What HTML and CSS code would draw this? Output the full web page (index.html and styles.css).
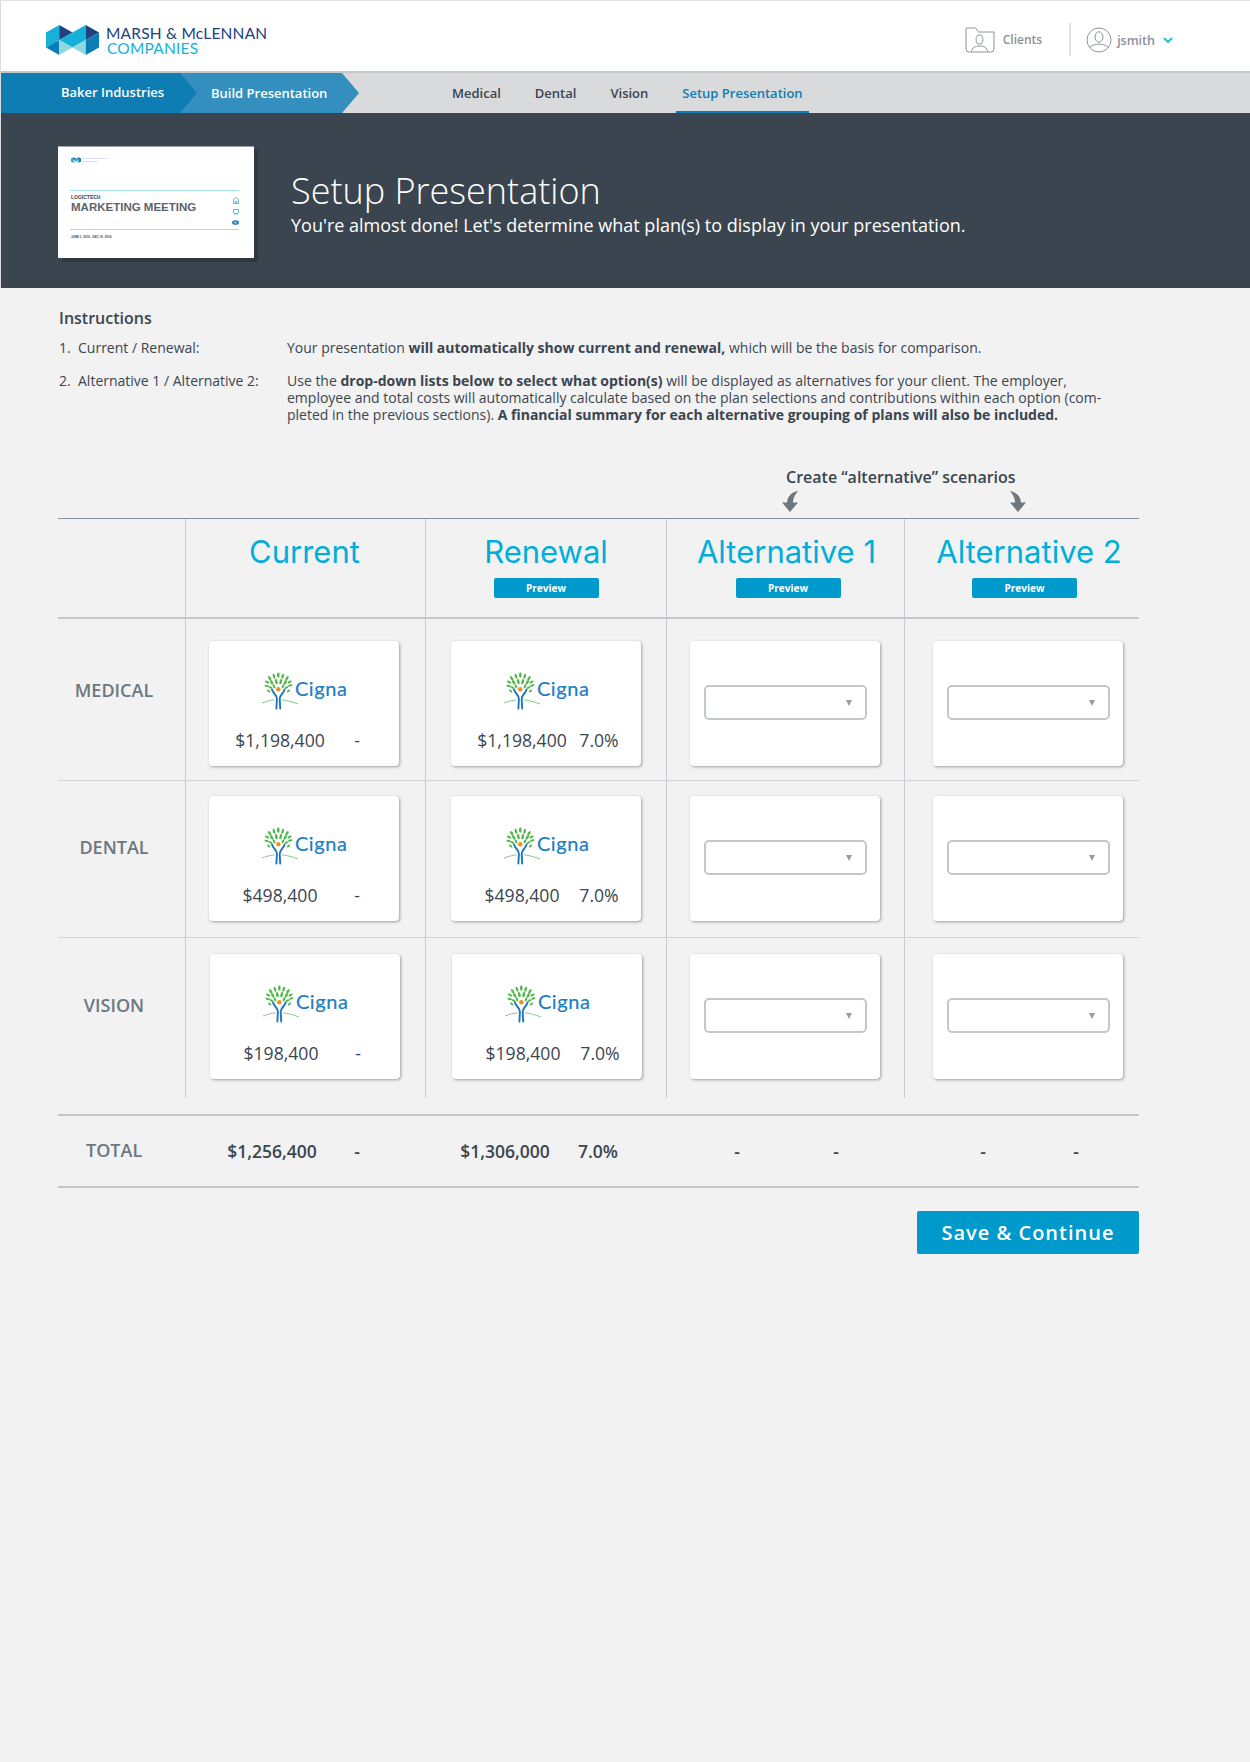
FILE: index.html
```html
<!DOCTYPE html>
<html lang="en">
<head>
    <meta charset="UTF-8">
    <title>Setup Presentation</title>
    <link rel="stylesheet" href="styles.css">
</head>
<body>
<svg class="defs" width="0" height="0">
    <symbol id="mmc-logo" viewBox="0 0 160 90">
        <polygon fill="#16b1d9" points="0,22 40,0 40,45 0,68"/>
        <polygon fill="#21407f" points="40,0 80,22 40,45"/>
        <polygon fill="#16b1d9" points="80,22 120,0 120,45 80,68 40,45"/>
        <polygon fill="#21407f" points="120,0 160,22 120,45"/>
        <polygon fill="#0d7db5" points="0,68 40,45 40,90"/>
        <polygon fill="#8fd8e0" points="40,45 80,68 40,90"/>
        <polygon fill="#8fd8e0" points="120,45 80,68 120,90"/>
        <polygon fill="#0d7db5" points="160,22 120,45 120,90 160,68"/>
    </symbol>
    <symbol id="cigna-tree" viewBox="0 0 36 38">
        <g fill="#4fb848">
            <ellipse cx="16.3" cy="3" rx="1.3" ry="2.8"/>
            <ellipse cx="12" cy="4.3" rx="1.2" ry="2.6" transform="rotate(-18 12 4.3)"/>
            <ellipse cx="20.7" cy="4.3" rx="1.2" ry="2.6" transform="rotate(18 20.7 4.3)"/>
            <ellipse cx="7.7" cy="6.3" rx="1.2" ry="2.5" transform="rotate(-35 7.7 6.3)"/>
            <ellipse cx="25" cy="6.3" rx="1.2" ry="2.5" transform="rotate(35 25 6.3)"/>
            <ellipse cx="14.3" cy="9.7" rx="1.3" ry="2.7" transform="rotate(-12 14.3 9.7)"/>
            <ellipse cx="18.7" cy="9.7" rx="1.3" ry="2.7" transform="rotate(12 18.7 9.7)"/>
            <ellipse cx="9.7" cy="10.3" rx="1.3" ry="2.5" transform="rotate(-30 9.7 10.3)"/>
            <ellipse cx="23.3" cy="10.3" rx="1.3" ry="2.5" transform="rotate(30 23.3 10.3)"/>
            <ellipse cx="5" cy="10" rx="1.1" ry="2.3" transform="rotate(-60 5 10)"/>
            <ellipse cx="27.6" cy="10" rx="1.1" ry="2.3" transform="rotate(60 27.6 10)"/>
            <ellipse cx="12" cy="14.3" rx="1.1" ry="2.2" transform="rotate(-25 12 14.3)"/>
            <ellipse cx="21" cy="14.3" rx="1.1" ry="2.2" transform="rotate(25 21 14.3)"/>
            <ellipse cx="4.7" cy="14" rx="1" ry="2.3" transform="rotate(-78 4.7 14)"/>
            <ellipse cx="28.3" cy="13.5" rx="1" ry="2.3" transform="rotate(78 28.3 13.5)"/>
            <ellipse cx="8.5" cy="15.5" rx="1" ry="2.1" transform="rotate(-65 8.5 15.5)"/>
            <ellipse cx="24.6" cy="15.5" rx="1" ry="2.1" transform="rotate(65 24.6 15.5)"/>
            <ellipse cx="6.7" cy="19" rx="1" ry="1.9" transform="rotate(-50 6.7 19)"/>
            <ellipse cx="26.5" cy="19" rx="1" ry="1.9" transform="rotate(50 26.5 19)"/>
        </g>
        <circle cx="16.3" cy="17.3" r="2.2" fill="#f28e1e"/>
        <g fill="none" stroke="#1c75bc" stroke-width="1.9" stroke-linecap="round">
            <path d="M10 17.5C11 21.5 14.4 22 14.9 27L14.4 36.5"/>
            <path d="M22.6 17.5C21.4 21.5 18.2 22 17.7 27L18.2 36.5"/>
        </g>
        <g fill="none" stroke="#7cc576" stroke-width="0.9">
            <path d="M0 31C4 29.4 8.5 28.4 12.5 27.8"/>
            <path d="M20 27.8C25 28.4 31 30 36 32"/>
        </g>
    </symbol>
</svg>

<div class="page">
    <header class="topbar">
        <div class="brand">
            <svg class="brand-mark" width="53" height="30"><use href="#mmc-logo"/></svg>
            <div class="brand-name">
                <div class="brand-line1">MARSH &amp; McLENNAN</div>
                <div class="brand-line2">COMPANIES</div>
            </div>
        </div>
        <div class="account">
            <a class="clients" href="#">
                <svg width="30" height="26" viewBox="0 0 30 26" fill="none" stroke="#8f959b" stroke-width="1">
                    <path d="M1 1H10.5L13.5 5H29V22Q29 25 26 25H4Q1 25 1 22Z"/>
                    <ellipse cx="14.5" cy="12.5" rx="3.4" ry="4.6"/>
                    <path d="M6.5 24.500C7 20.500 10 19 14.500 19C19 19 22 20.500 22.500 24.500"/>
                </svg>
                <span>Clients</span>
            </a>
            <a class="user" href="#">
                <svg width="26" height="26" viewBox="0 0 26 26" fill="none" stroke="#8f959b" stroke-width="1">
                    <circle cx="13" cy="13" r="12"/>
                    <ellipse cx="13" cy="10" rx="4" ry="5.200"/>
                    <path d="M3.500 20.500C6.500 18 9.500 17.200 13 17.200C16.500 17.200 19.500 18 22.500 20.500"/>
                </svg>
                <span>jsmith</span>
                <svg class="caret" width="10" height="7" viewBox="0 0 10 7" fill="none" stroke="#2cc0cc" stroke-width="2.2">
                    <path d="M1 1L5 5L9 1"/>
                </svg>
            </a>
        </div>
    </header>

    <nav class="navbar">
        <a class="crumb crumb-first" href="#">Baker Industries</a>
        <a class="crumb crumb-second" href="#">Build Presentation</a>
        <ul class="tabs">
            <li><a href="#">Medical</a></li>
            <li><a href="#">Dental</a></li>
            <li><a href="#">Vision</a></li>
            <li class="cur"><a href="#">Setup Presentation</a></li>
        </ul>
    </nav>

    <section class="banner">
        <div class="thumb">
            <div class="thumb-brand">
                <svg width="10" height="6"><use href="#mmc-logo"/></svg>
                <span>MARSH &amp; McLENNAN<br>COMPANIES</span>
            </div>
            <div class="thumb-body">
                <div class="thumb-client">LOGICTECH</div>
                <div class="thumb-title">MARKETING MEETING</div>
                <div class="thumb-icons">
                    <svg width="6" height="7" viewBox="0 0 6 7" fill="none" stroke="#3fa9d6" stroke-width="0.8"><path d="M0.500 6.500V2.500L3 0.500L5.500 2.500V6.500ZM2.200 6.500V4.500H3.800V6.500"/></svg>
                    <svg width="6" height="6" viewBox="0 0 6 6" fill="none" stroke="#3fa9d6" stroke-width="0.9"><path d="M0.500 0.500H5.500V3L4.300 5.500L3 4L1.700 5.500L0.500 3Z"/></svg>
                    <svg width="7" height="5" viewBox="0 0 7 5"><ellipse cx="3.500" cy="2.500" rx="3.500" ry="2.300" fill="#2f7fb8"/><circle cx="3.500" cy="2.500" r="1" fill="#bfe3f2"/></svg>
                </div>
            </div>
            <div class="thumb-date">JUNE 1, 2016 - DEC 30, 2016</div>
        </div>
        <div class="banner-text">
            <h1>Setup Presentation</h1>
            <p>You're almost done! Let's determine what plan(s) to display in your presentation.</p>
        </div>
    </section>

    <main class="content">
        <h2 class="instr-title">Instructions</h2>
        <div class="instr">
            <span>1.</span>
            <span>Current / Renewal:</span>
            <p>Your presentation <b>will automatically show current and renewal,</b> which will be the basis for comparison.</p>
            <span>2.</span>
            <span>Alternative 1 / Alternative 2:</span>
            <p>Use the <b>drop-down lists below to select what option(s)</b> will be displayed as alternatives for your client. The employer,<br>employee and total costs will automatically calculate based on the plan selections and contributions within each option (com-<br>pleted in the previous sections). <b>A financial summary for each alternative grouping of plans will also be included.</b></p>
        </div>

        <div class="scenario">
            <div class="scenario-text">Create “alternative” scenarios</div>
            <div class="scenario-arrows">
                <svg width="16" height="21" viewBox="0 0 16 21" fill="#6d7780"><path d="M16 0C10 1 5.500 5 5 11.500H0L8 21L16 11.500H11C11 8 12.500 4 16 0Z"/></svg>
                <svg width="16" height="21" viewBox="0 0 16 21" fill="#6d7780"><path d="M0 0C6 1 10.500 5 11 11.500H16L8 21L0 11.500H5C5 8 3.500 4 0 0Z"/></svg>
            </div>
        </div>

        <div class="tbl-row tbl-head">
            <div class="cell"></div>
            <div class="cell head-cell head-cur"><h3>Current</h3></div>
            <div class="cell head-cell"><h3>Renewal</h3><a class="btn-preview" href="#">Preview</a></div>
            <div class="cell head-cell head-alt1"><h3>Alternative 1</h3><a class="btn-preview" href="#">Preview</a></div>
            <div class="cell head-cell head-alt2"><h3>Alternative 2</h3><a class="btn-preview" href="#">Preview</a></div>
        </div>

        <div class="tbl-row row-medical">
            <div class="cell row-label">MEDICAL</div>
            <div class="cell card-cell">
                <div class="card plan">
                    <div class="cigna"><svg width="36" height="38"><use href="#cigna-tree"/></svg><span>Cigna</span></div>
                    <div class="figures"><span>$1,198,400</span><span>-</span></div>
                </div>
            </div>
            <div class="cell card-cell cell-ren">
                <div class="card plan">
                    <div class="cigna"><svg width="36" height="38"><use href="#cigna-tree"/></svg><span>Cigna</span></div>
                    <div class="figures"><span>$1,198,400</span><span>7.0%</span></div>
                </div>
            </div>
            <div class="cell card-cell"><div class="card"><div class="select-box"></div></div></div>
            <div class="cell card-cell cell-alt2"><div class="card"><div class="select-box"></div></div></div>
        </div>

        <div class="tbl-row row-dental">
            <div class="cell row-label">DENTAL</div>
            <div class="cell card-cell">
                <div class="card plan">
                    <div class="cigna"><svg width="36" height="38"><use href="#cigna-tree"/></svg><span>Cigna</span></div>
                    <div class="figures"><span>$498,400</span><span>-</span></div>
                </div>
            </div>
            <div class="cell card-cell cell-ren">
                <div class="card plan">
                    <div class="cigna"><svg width="36" height="38"><use href="#cigna-tree"/></svg><span>Cigna</span></div>
                    <div class="figures"><span>$498,400</span><span>7.0%</span></div>
                </div>
            </div>
            <div class="cell card-cell"><div class="card"><div class="select-box"></div></div></div>
            <div class="cell card-cell cell-alt2"><div class="card"><div class="select-box"></div></div></div>
        </div>

        <div class="tbl-row row-vision">
            <div class="cell row-label">VISION</div>
            <div class="cell card-cell">
                <div class="card plan">
                    <div class="cigna"><svg width="36" height="38"><use href="#cigna-tree"/></svg><span>Cigna</span></div>
                    <div class="figures"><span>$198,400</span><span>-</span></div>
                </div>
            </div>
            <div class="cell card-cell cell-ren">
                <div class="card plan">
                    <div class="cigna"><svg width="36" height="38"><use href="#cigna-tree"/></svg><span>Cigna</span></div>
                    <div class="figures"><span>$198,400</span><span>7.0%</span></div>
                </div>
            </div>
            <div class="cell card-cell"><div class="card"><div class="select-box"></div></div></div>
            <div class="cell card-cell cell-alt2"><div class="card"><div class="select-box"></div></div></div>
        </div>

        <div class="tbl-row tbl-total">
            <div class="total-label">TOTAL</div>
            <div class="total total-cur"><span>$1,256,400</span><span>-</span></div>
            <div class="total total-ren"><span>$1,306,000</span><span>7.0%</span></div>
            <div class="total total-alt1"><span>-</span><span>-</span></div>
            <div class="total total-alt2"><span>-</span><span>-</span></div>
        </div>

        <div class="actions">
            <a class="btn-save" href="#">Save &amp; Continue</a>
        </div>
    </main>
</div>
</body>
</html>
```

FILE: styles.css
```css
body{
    margin: 0;
    background: #f2f2f2;
    font-family: "Open Sans", "Liberation Sans", sans-serif;
    color: #3b4550;
}
a{
    color: inherit;
    text-decoration: none;
}
.defs{
    display: block;
    height: 0;
}
.page{
    min-height: 1762px;
}

/* top bar */
.topbar{
    height: 73px;
    box-sizing: border-box;
    background: #fff;
    border-top: 1px solid #e2e2e2;
    border-left: 1px solid #dcdcdc;
    border-bottom: 2px solid #c6c7c9;
    display: flex;
    justify-content: space-between;
    align-items: flex-start;
}
.brand{
    display: flex;
    margin: 24px 0 0 45px;
}
.brand-mark{
    margin-right: 7px;
}
.brand-name{
    font-family: "Lato", sans-serif;
    font-size: 15.5px;
    line-height: 15px;
    letter-spacing: 0.2px;
    margin-top: 1px;
}
.brand-line1{
    color: #21407f;
}
.brand-line2{
    color: #16b1d9;
    margin-left: 1px;
}
.account{
    display: flex;
    margin: 22px 77px 0 0;
}
.clients{
    display: flex;
    align-items: center;
    gap: 8px;
    height: 33px;
    padding-right: 27px;
    border-right: 2px solid #e0e1e3;
    font-size: 12px;
    font-weight: 600;
    color: #8a9199;
}
.user{
    display: flex;
    align-items: center;
    height: 33px;
    padding-left: 15px;
    font-size: 12.5px;
    font-weight: 600;
    color: #8a9199;
}
.user span{
    margin: 2px 8px 0 5px;
}
.caret{
    margin-top: 1px;
}

/* nav */
.navbar{
    height: 40px;
    background: #d9dadc;
    border-left: 1px solid #dcdcdc;
    display: flex;
    font-size: 13px;
    font-weight: 600;
}
.crumb{
    color: #fff;
    display: flex;
    align-items: center;
    height: 40px;
    box-sizing: border-box;
}
.crumb-first{
    position: relative;
    z-index: 1;
    width: 196px;
    padding: 0 0 2px 60px;
    background: #0e7db4;
    clip-path: polygon(0 0, 179px 0, 100% 50%, 179px 100%, 0 100%);
}
.crumb-second{
    width: 179px;
    margin-left: -17px;
    padding-left: 31px;
    background: #358fbe;
    clip-path: polygon(0 0, 162px 0, 100% 50%, 162px 100%, 0 100%);
}
.tabs{
    margin: 0 0 0 87px;
    padding: 0;
    list-style: none;
    display: flex;
    gap: 22px;
}
.tabs a{
    display: block;
    height: 38px;
    line-height: 40px;
    padding: 0 6px;
}
.tabs .cur a{
    color: #0e7db4;
    border-bottom: 2px solid #0e7db4;
}

/* banner */
.banner{
    height: 175px;
    box-sizing: border-box;
    background: #3b4550;
    border-left: 1px solid #dcdcdc;
    padding: 33px 0 0 57px;
    display: flex;
    color: #fff;
}
.thumb{
    width: 196px;
    height: 112px;
    box-sizing: border-box;
    background: #fff;
    border-top: 1px solid #9aa1a8;
    box-shadow: 4px 4px 0 #2f3843;
    padding: 10px 15px 0 12px;
    color: #3b4550;
}
.thumb-brand{
    display: flex;
    gap: 1px;
    height: 6px;
    padding-left: 1px;
    font-family: "Liberation Sans", sans-serif;
    font-size: 2.5px;
    line-height: 3px;
    color: #9aa7c4;
}
.thumb-body{
    position: relative;
    margin-top: 27px;
    height: 40px;
    padding: 3px 0 0 1px;
    box-sizing: border-box;
    border-top: 1px solid #a5e3ea;
    border-bottom: 1px solid #a5e3ea;
}
.thumb-client{
    font-family: "Liberation Sans", sans-serif;
    font-size: 5px;
    font-weight: 700;
    line-height: 6px;
}
.thumb-title{
    font-family: "Liberation Sans", sans-serif;
    font-size: 11.5px;
    font-weight: 700;
    line-height: 14px;
    color: #5d6369;
}
.thumb-icons{
    position: absolute;
    top: 6px;
    right: 0;
    display: flex;
    flex-direction: column;
    align-items: center;
    gap: 5px;
}
.thumb-icons svg{
    display: block;
}
.thumb-date{
    font-family: "Liberation Sans", sans-serif;
    font-size: 3px;
    font-weight: 700;
    line-height: 6px;
    margin: 4px 0 0 1px;
}
.banner-text{
    margin-left: 37px;
}
.banner-text h1{
    margin: 24px 0 0;
    font-size: 36px;
    font-weight: 300;
    line-height: 42px;
}
.banner-text p{
    margin: 0;
    font-size: 18px;
    line-height: 26px;
}

/* instructions */
.content{
    padding: 0 111px 0 58px;
}
.instr-title{
    margin: 0 0 0 1px;
    padding-top: 19px;
    font-size: 16px;
    font-weight: 600;
    line-height: 22px;
}
.instr{
    display: grid;
    grid-template-columns: 19px 209px 1fr;
    row-gap: 16px;
    margin: 10px 0 0 1px;
    font-size: 14px;
    line-height: 17px;
}
.instr p{
    margin: 0;
}
.instr b{
    font-weight: 700;
}

/* create alternative */
.scenario{
    margin-top: 44px;
    height: 51px;
}
.scenario-text{
    margin-left: 728px;
    font-size: 16px;
    font-weight: 600;
    line-height: 20px;
}
.scenario-arrows{
    display: flex;
    gap: 212px;
    margin: 4px 0 0 724px;
}
.scenario-arrows svg{
    display: block;
}

/* plan table */
.tbl-row{
    display: grid;
    grid-template-columns: 127px 240px 241px 238px 235px;
}
.cell{
    border-left: 1px solid #c9cbce;
    box-sizing: border-box;
}
.cell:first-child{
    border-left: 0;
}
.tbl-head{
    height: 101px;
    box-sizing: border-box;
    border-top: 1px solid #8a9199;
    border-bottom: 2px solid #c6c7cb;
}
.head-cell{
    display: flex;
    flex-direction: column;
    align-items: center;
}
.head-cell h3{
    margin: 15px 0 0;
    font-family: "Inter", sans-serif;
    font-size: 31px;
    font-weight: 400;
    line-height: 36px;
    color: #00aed9;
    white-space: nowrap;
}
.head-cur{
    padding-right: 2px;
}
.head-alt1{
    padding-left: 2px;
}
.head-alt1 .btn-preview{
    margin-left: 3px;
}
.head-alt2{
    padding-left: 14px;
}
.head-alt2 .btn-preview{
    margin-right: 9px;
}
.btn-preview{
    display: block;
    width: 105px;
    height: 20px;
    margin-top: 8px;
    border-radius: 2px;
    background: #0099cc;
    color: #fff;
    font-size: 10px;
    font-weight: 700;
    line-height: 21px;
    text-align: center;
}
.row-medical,
.row-dental{
    border-bottom: 1px solid #d0d2d5;
    box-sizing: border-box;
}
.row-medical{
    height: 162px;
}
.row-dental{
    height: 157px;
}
.row-vision{
    height: 160px;
}
.row-label{
    align-self: center;
    padding-right: 15px;
    font-size: 18px;
    font-weight: 600;
    text-align: center;
    color: #6d7780;
}
.row-medical .row-label{
    margin-top: -20px;
}
.row-dental .row-label{
    margin-top: -24px;
}
.row-vision .row-label{
    margin-top: -27px;
}
.card-cell{
    padding-left: 23px;
}
.cell-ren{
    padding-left: 25px;
}
.row-medical .card-cell{
    padding-top: 22px;
}
.row-dental .card-cell{
    padding-top: 15px;
}
.row-vision .card-cell{
    padding-top: 16px;
}
.row-vision .plan{
    margin-left: 1px;
}
.cell-alt2{
    padding-left: 28px;
}
.card{
    width: 190px;
    height: 125px;
    box-sizing: border-box;
    background: #fff;
    border-radius: 4px;
    box-shadow: 1px 1px 3px rgba(0, 0, 0, 0.35);
    overflow: hidden;
}
.cigna{
    display: flex;
    justify-content: center;
    margin-top: 31px;
    padding-left: 2px;
    height: 38px;
}
.cigna span{
    margin: 0 0 0 -3.5px;
    font-family: "Lato", sans-serif;
    font-size: 20px;
    line-height: 33px;
    letter-spacing: 0.6px;
    color: #1b7dc3;
    -webkit-text-stroke: 0.2px #1b7dc3;
}
.figures{
    display: grid;
    grid-template-columns: 100px 54px;
    margin: 17px 0 0 21px;
    font-size: 17.6px;
    line-height: 26px;
    text-align: center;
    white-space: nowrap;
}
.select-box{
    width: 163px;
    height: 35px;
    box-sizing: border-box;
    margin: 44px 0 0 14px;
    border: 2px solid #c3c7cc;
    border-radius: 5px;
    display: flex;
    justify-content: flex-end;
    align-items: center;
    padding-right: 13px;
}
.select-box::after{
    content: "";
    width: 0;
    height: 0;
    border-left: 3px solid transparent;
    border-right: 3px solid transparent;
    border-top: 6px solid #969ca3;
}

/* total */
.tbl-total{
    height: 74px;
    box-sizing: border-box;
    margin-top: 16px;
    border-top: 2px solid #c6c7cb;
    border-bottom: 2px solid #c6c7cb;
    align-items: center;
    font-size: 17.5px;
    font-weight: 600;
}
.total-label{
    padding: 0 0 3px 28px;
    font-size: 18px;
    color: #6d7780;
}
.total{
    display: grid;
    text-align: center;
    white-space: nowrap;
}
.total-cur{
    padding-left: 37px;
    grid-template-columns: 100px 70px;
}
.total-ren{
    padding-left: 30px;
    grid-template-columns: 100px 86px;
}
.total-alt1{
    padding-left: 21px;
    grid-template-columns: 100px 98px;
}
.total-alt2{
    padding-left: 29px;
    grid-template-columns: 100px 86px;
}

/* save */
.actions{
    display: flex;
    justify-content: flex-end;
    margin-top: 23px;
}
.btn-save{
    display: block;
    width: 222px;
    height: 43px;
    border-radius: 2px;
    background: #0099cc;
    color: #fff;
    font-size: 20px;
    font-weight: 600;
    line-height: 43px;
    letter-spacing: 1px;
    text-align: center;
}
```
